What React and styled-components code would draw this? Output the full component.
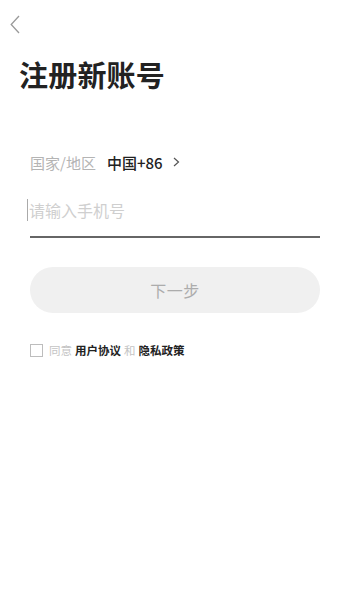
import React, { useState } from "react";
import styled, { createGlobalStyle } from "styled-components";

const GlobalStyle = createGlobalStyle`
  html, body {
    margin: 0;
    padding: 0;
    background: #fff;
  }
  body {
    font-family: "Noto Sans CJK SC", "Noto Sans", sans-serif;
    -webkit-font-smoothing: antialiased;
  }
`;

const Page = styled.div`
  width: 350px;
  height: 600px;
  background: #fff;
  box-sizing: border-box;
  padding: 15px 30px 0 30px;
`;

const BackButton = styled.button`
  display: block;
  margin: 0 0 0 -20px;
  padding: 0;
  width: 10px;
  height: 19px;
  border: none;
  background: none;
  cursor: pointer;
`;

const Title = styled.h1`
  margin: 23px 0 0 -11px;
  font-size: 29px;
  line-height: 34px;
  font-weight: 700;
  color: #222;
  letter-spacing: 0.2px;
`;

const CountryRow = styled.div`
  display: flex;
  align-items: center;
  margin-top: 60px;
  height: 22px;
  font-size: 15px;
`;

const CountryLabel = styled.span`
  color: #b4b4b4;
`;

const CountryValue = styled.span`
  margin-left: 11px;
  color: #222;
  font-weight: 500;
`;

const Arrow = styled.svg`
  margin-left: 10px;
  width: 7px;
  height: 10px;
`;

const InputWrap = styled.div`
  margin-top: 26px;
  padding-bottom: 15px;
  border-bottom: 2px solid #666;
  display: flex;
`;

const PhoneInput = styled.input`
  flex: 1;
  margin-left: -3px;
  border: none;
  outline: none;
  padding: 0 0 0 1px;
  height: 22px;
  font-family: inherit;
  font-size: 16px;
  color: #222;
  background: transparent;
  caret-color: #999;
  border-left: 1.5px solid #aaa;

  &::placeholder {
    color: #cfcfcf;
  }
`;

const NextButton = styled.button`
  display: block;
  width: 100%;
  height: 46px;
  margin-top: 29px;
  border: none;
  border-radius: 23px;
  background: ${(p) => (p.$active ? "#222" : "#f0f0f0")};
  color: ${(p) => (p.$active ? "#fff" : "#acacac")};
  font-family: inherit;
  font-size: 16px;
  letter-spacing: 0.5px;
`;

const Agreement = styled.label`
  display: flex;
  align-items: center;
  margin-top: 30px;
  height: 14px;
  font-size: 11.5px;
  color: #c4c4c4;
`;

const Box = styled.span`
  width: 11px;
  height: 11px;
  border: 1px solid #bdbdbd;
  margin-right: 6px;
  background: ${(p) => (p.$checked ? "#222" : "#fff")};
`;

const Link = styled.span`
  color: #222;
  font-weight: 700;
  margin: 0 3px;
`;

export default function App() {
  const [phone, setPhone] = useState("");
  const [agree, setAgree] = useState(false);

  return (
    <>
      <GlobalStyle />
      <Page>
        <BackButton aria-label="返回">
          <svg width="10" height="19" viewBox="0 0 10 19">
            <path d="M9 1 L1.2 9.5 L9 18" fill="none" stroke="#9a9a9a" strokeWidth="1.3" />
          </svg>
        </BackButton>
        <Title>注册新账号</Title>

        <CountryRow>
          <CountryLabel>国家/地区</CountryLabel>
          <CountryValue>中国+86</CountryValue>
          <Arrow viewBox="0 0 7 10">
            <path d="M1 1 L5.5 5 L1 9" fill="none" stroke="#555" strokeWidth="1.2" />
          </Arrow>
        </CountryRow>

        <InputWrap>
          <PhoneInput
            placeholder="请输入手机号"
            value={phone}
            onChange={(e) => setPhone(e.target.value)}
          />
        </InputWrap>

        <NextButton $active={phone.length === 11 && agree}>下一步</NextButton>

        <Agreement onClick={() => setAgree(!agree)}>
          <Box $checked={agree} />
          同意<Link>用户协议</Link>和<Link>隐私政策</Link>
        </Agreement>
      </Page>
    </>
  );
}
